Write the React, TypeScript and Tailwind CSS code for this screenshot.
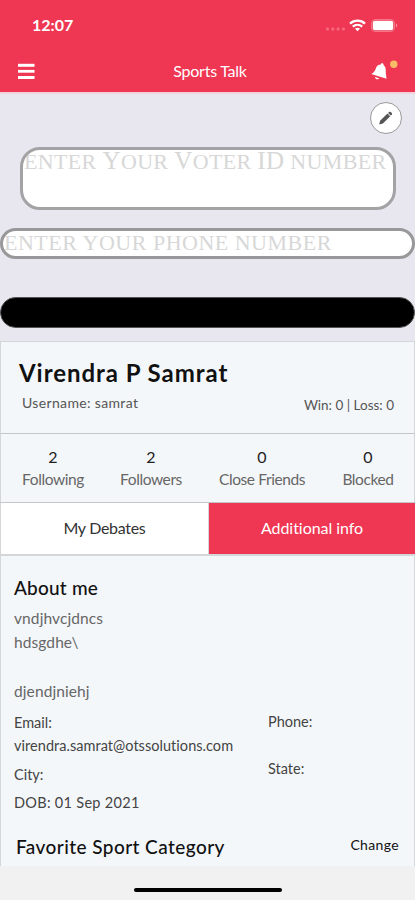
import React from 'react';

interface StatProps {
  value: number;
  label: string;
  className: string;
}

function Stat({ value, label, className }: StatProps) {
  return (
    <div className={`flex flex-col items-center whitespace-nowrap ${className}`}>
      <span className="text-[16px] leading-[23px] text-[#222]">{value}</span>
      <span className="text-[15.5px] leading-[22px] tracking-[-0.4px] text-[#666]">{label}</span>
    </div>
  );
}

function StatusBar() {
  return (
    <div className="flex h-[50px] items-center justify-between pl-8 pr-[17px]">
      <span className="text-[16px] font-bold">12:07</span>
      <div className="flex items-center">
        <svg width="20" height="4" viewBox="0 0 20 4" className="mr-[3px] mt-2" fill="#f5687c">
          <rect x="0" y="0.5" width="3" height="3" rx="1" />
          <rect x="5.3" y="0.5" width="3" height="3" rx="1" />
          <rect x="10.6" y="0.5" width="3" height="3" rx="1" />
          <rect x="15.9" y="0.5" width="3" height="3" rx="1" />
        </svg>
        <svg width="17" height="13" viewBox="0 0 17 13" fill="none" stroke="white" strokeWidth="2.3">
          <path d="M1 4.7C5.2 .7 11.8.7 16 4.7" />
          <path d="M3.8 7.7C6.6 5.2 10.4 5.2 13.2 7.7" />
          <path d="M6 9.7C7.4 8.5 9.6 8.5 11 9.7L8.5 12.3Z" fill="white" stroke="none" />
        </svg>
        <svg width="27" height="13" viewBox="0 0 27 13" className="ml-[5px]">
          <rect x="0.5" y="0.5" width="23" height="12" rx="3.5" fill="none" stroke="#f57587" />
          <rect x="1.8" y="1.8" width="20.4" height="9.4" rx="2" fill="white" />
          <path d="M25 4.5C26.5 5 26.5 8 25 8.5Z" fill="#f796a3" />
        </svg>
      </div>
    </div>
  );
}

function NavBar() {
  return (
    <div className="flex h-[42px] items-center justify-between pl-[18px] pr-[17px]">
      <button type="button" aria-label="Menu">
        <svg width="17" height="17" viewBox="0 0 17 17" fill="white">
          <rect y="0.8" width="16.5" height="3" />
          <rect y="6.9" width="16.5" height="2.8" />
          <rect y="13" width="16.5" height="3" />
        </svg>
      </button>
      <h1 className="ml-[15px] text-[16px] tracking-[-0.25px]">Sports Talk</h1>
      <button type="button" aria-label="Notifications">
        <svg width="28" height="22" viewBox="0 0 28 22">
          <path
            d="M1.2 14C5 11.8 5.3 9.8 6.2 7.5C7.2 4.9 9.5 4.8 10.7 4.6L11.6 3.1L13.2 3.6L13.7 5.3C16.8 7.6 15.2 11.5 16.2 15.7L16.5 18.8Z"
            fill="white"
          />
          <path d="M4.9 16.9L9.2 18.2C8.2 20.3 5.2 19.2 4.9 16.9Z" fill="white" />
          <circle cx="23.8" cy="4.2" r="3.7" fill="#f8bd66" />
        </svg>
      </button>
    </div>
  );
}

function Cover() {
  return (
    <section className="flex h-[249px] flex-col overflow-hidden border-t-2 border-[#f2d2da] bg-[#e8e7ef] pt-[7px]">
      <button
        type="button"
        aria-label="Edit"
        className="mr-[13px] mt-px flex size-8 items-center justify-center self-end rounded-full border border-[#999] bg-white"
      >
        <svg width="16" height="16" viewBox="0 0 16 16" fill="#555">
          <path d="M1.2 14.5L2.1 10.8L9.5 3.5L12.3 6.2L4.9 13.5Z" />
          <path d="M10.1 2.9L11.3 1.8C12.4 1 14.7 3.2 14 4.2L12.8 5.6Z" />
        </svg>
      </button>
      <div className="ml-5 mt-[13px] h-[63px] w-[376px] shrink-0 overflow-hidden whitespace-nowrap rounded-[20px] border-[3px] border-[#a3a3a5] bg-white pl-px font-['Liberation_Serif',serif] text-[22px] leading-[22px] text-[#d7d7d7]">
        <span className="tracking-[0.35px]">
          ENTER <span className="text-[25px]">Y</span>OUR <span className="text-[25px]">V</span>OTER{' '}
          <span className="text-[25px]">ID</span> NUMBER
        </span>
      </div>
      <div className="mt-[18px] h-[31px] shrink-0 overflow-hidden whitespace-nowrap rounded-full border-[3px] border-[#98989a] bg-white pl-px font-['Liberation_Serif',serif] text-[22px] leading-[23px] text-[#d7d7d7]">
        <span className="tracking-[0.5px]">ENTER YOUR PHONE NUMBER</span>
      </div>
      <button
        type="button"
        aria-label="Submit"
        className="mt-[38px] h-[31px] shrink-0 rounded-full border border-[#555] bg-black"
      />
    </section>
  );
}

function Profile() {
  return (
    <section className="flex h-[93px] flex-col border-y border-t-[#d5d5db] border-b-[#c4c7c9] border-x border-x-[#d4d7d9] pl-[18px] pr-5">
      <h2 className="mt-[14px] whitespace-nowrap text-[24px] font-bold leading-[34px] tracking-[0.95px] text-[#111]">
        Virendra P Samrat
      </h2>
      <div className="flex justify-between whitespace-nowrap pl-[3px] text-[14px] text-[#555]">
        <span className="leading-[25px] tracking-[0.35px]">Username: samrat</span>
        <span className="pt-[3px] text-[13.5px] leading-6">Win: 0 | Loss: 0</span>
      </div>
    </section>
  );
}

function About() {
  return (
    <section className="h-[312px] border-x border-t-2 border-x-[#d4d7d9] border-t-[#d4d7d9] pl-[13px] pr-[15px] text-[14.5px] text-[#444]">
      <h3 className="mt-[18px] text-[19px] font-medium leading-[28px] tracking-[0.2px] text-[#111]">
        About me
      </h3>
      <p className="mt-[4px] whitespace-pre-line text-[15.5px] leading-[24.3px] tracking-[0.1px] text-[#666]">
        {'vndjhvcjdncs\nhdsgdhe\\\n\ndjendjniehj'}
      </p>
      <div className="mt-[8px] flex">
        <div className="w-[254px] whitespace-nowrap">
          <p className="leading-6">Email:</p>
          <p className="leading-[22px] tracking-[0.04px]">virendra.samrat@otssolutions.com</p>
          <p className="mt-[6px] leading-6">City:</p>
          <p className="mt-[4px] leading-6 tracking-[0.3px]">DOB: 01 Sep 2021</p>
        </div>
        <div>
          <p className="leading-[22px]">Phone:</p>
          <p className="mt-6 leading-6">State:</p>
        </div>
      </div>
      <div className="mt-[18px] flex items-center justify-between pl-[2px] text-[#111]">
        <h3 className="whitespace-nowrap text-[19px] font-medium leading-[28px] tracking-[0.43px]">
          Favorite Sport Category
        </h3>
        <button type="button" className="pb-[5px] text-[14px] tracking-[0.35px]">
          Change
        </button>
      </div>
    </section>
  );
}

export default function App() {
  return (
    <main className="h-[900px] w-[415px] overflow-hidden bg-[#f4f7fa] font-[Lato,sans-serif]">
      <header className="bg-[#ef3652] text-white">
        <StatusBar />
        <NavBar />
      </header>
      <Cover />
      <Profile />

      {/* Stats */}
      <section className="flex h-[68px] border-x border-x-[#d4d7d9] pt-[11px]">
        <Stat value={2} label="Following" className="w-[104px]" />
        <Stat value={2} label="Followers" className="w-[92px]" />
        <Stat value={0} label="Close Friends" className="w-[130px]" />
        <Stat value={0} label="Blocked" className="w-[82px]" />
      </section>

      {/* Tabs */}
      <div className="flex h-[52px] border-t border-t-[#c4c7c9] text-[16px]">
        <button
          type="button"
          className="w-[209px] border-x border-x-[#d4d7d9] bg-white pb-[2px] tracking-[-0.3px] text-[#333]"
        >
          My Debates
        </button>
        <button type="button" className="flex-1 bg-[#ef3652] pb-[2px] tracking-[-0.05px] text-white">
          Additional info
        </button>
      </div>

      <About />

      {/* Home indicator */}
      <footer className="flex h-[34px] justify-center bg-[#f2f1f1] pt-[22px]">
        <div className="h-[4px] w-[148px] rounded-full bg-black" />
      </footer>
    </main>
  );
}
